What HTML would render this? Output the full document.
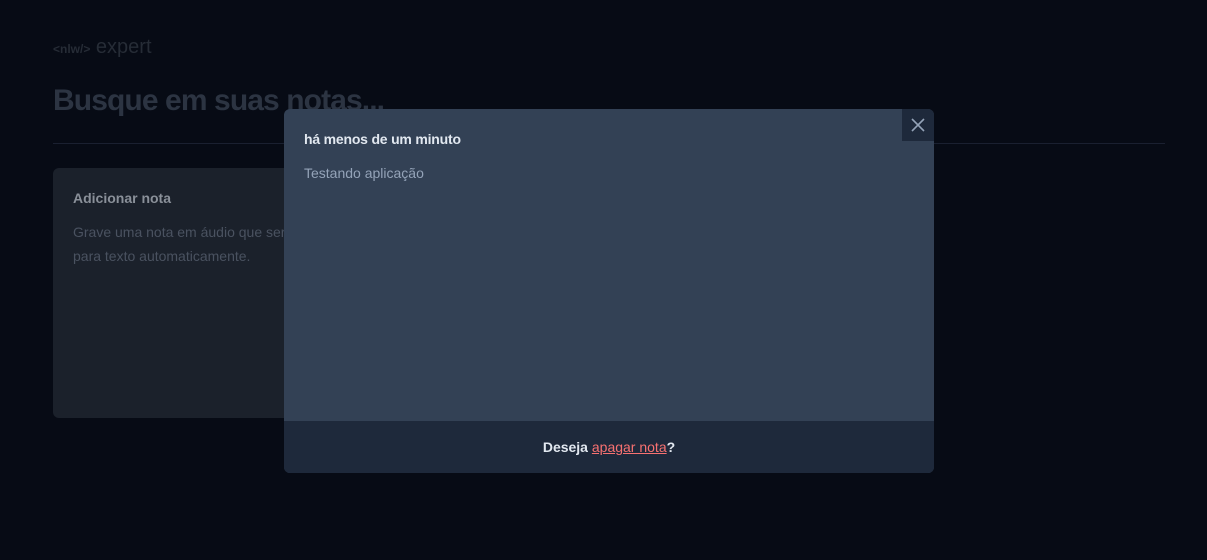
<!DOCTYPE html>
<html><head><meta charset="utf-8"><style>
*{margin:0;padding:0;box-sizing:border-box}
body{width:1207px;height:560px;background:#070b15;font-family:"Liberation Sans",sans-serif;position:relative;overflow:hidden}
.logo{position:absolute;left:53px;top:36px;font-size:20px;color:#262c36;letter-spacing:0}
.logo b{font-size:12px;font-weight:bold}
h1{position:absolute;left:53px;top:84px;font-size:30px;font-weight:bold;color:#2c3442;letter-spacing:-0.9px}
.line{position:absolute;left:53px;top:143px;width:1112px;height:1px;background:#1a2030}
.card{position:absolute;left:53px;top:168px;width:360px;height:250px;background:#1b212b;border-radius:6px;padding:22px 20px}
.card .t{font-size:14px;font-weight:bold;color:#8a9099;margin-bottom:14px}
.card .d{font-size:14px;color:#4a5260;line-height:24px}
.modal{position:absolute;left:284px;top:109px;width:650px;height:364px;background:#334155;border-radius:6px;overflow:hidden}
.close{position:absolute;right:0;top:0;width:32px;height:32px;background:#1e293b}
.m1{position:absolute;left:20px;top:22px;font-size:14px;font-weight:bold;color:#e2e8f0;letter-spacing:-0.2px}
.m2{position:absolute;left:20px;top:56px;font-size:14px;color:#94a3b8}
.foot{position:absolute;left:0;bottom:0;width:650px;height:52px;background:#1e293b;text-align:center;line-height:52px;font-size:14px;font-weight:bold;color:#e2e8f0}
.foot span{color:#f87171;font-weight:normal;text-decoration:underline}
</style></head><body>
<div class="logo"><b>&lt;nlw/&gt;</b> expert</div>
<h1>Busque em suas notas...</h1>
<div class="line"></div>
<div class="card"><div class="t">Adicionar nota</div><div class="d">Grave uma nota em áudio que será convertida<br>para texto automaticamente.</div></div>
<div class="modal">
<div class="close"><svg width="32" height="32" viewBox="0 0 32 32"><path d="M10 10L22 22M22 10L10 22" stroke="#94a3b8" stroke-width="1.6"/></svg></div>
<div class="m1">há menos de um minuto</div>
<div class="m2">Testando aplicação</div>
<div class="foot">Deseja <span>apagar nota</span>?</div>
</div>
</body></html>
